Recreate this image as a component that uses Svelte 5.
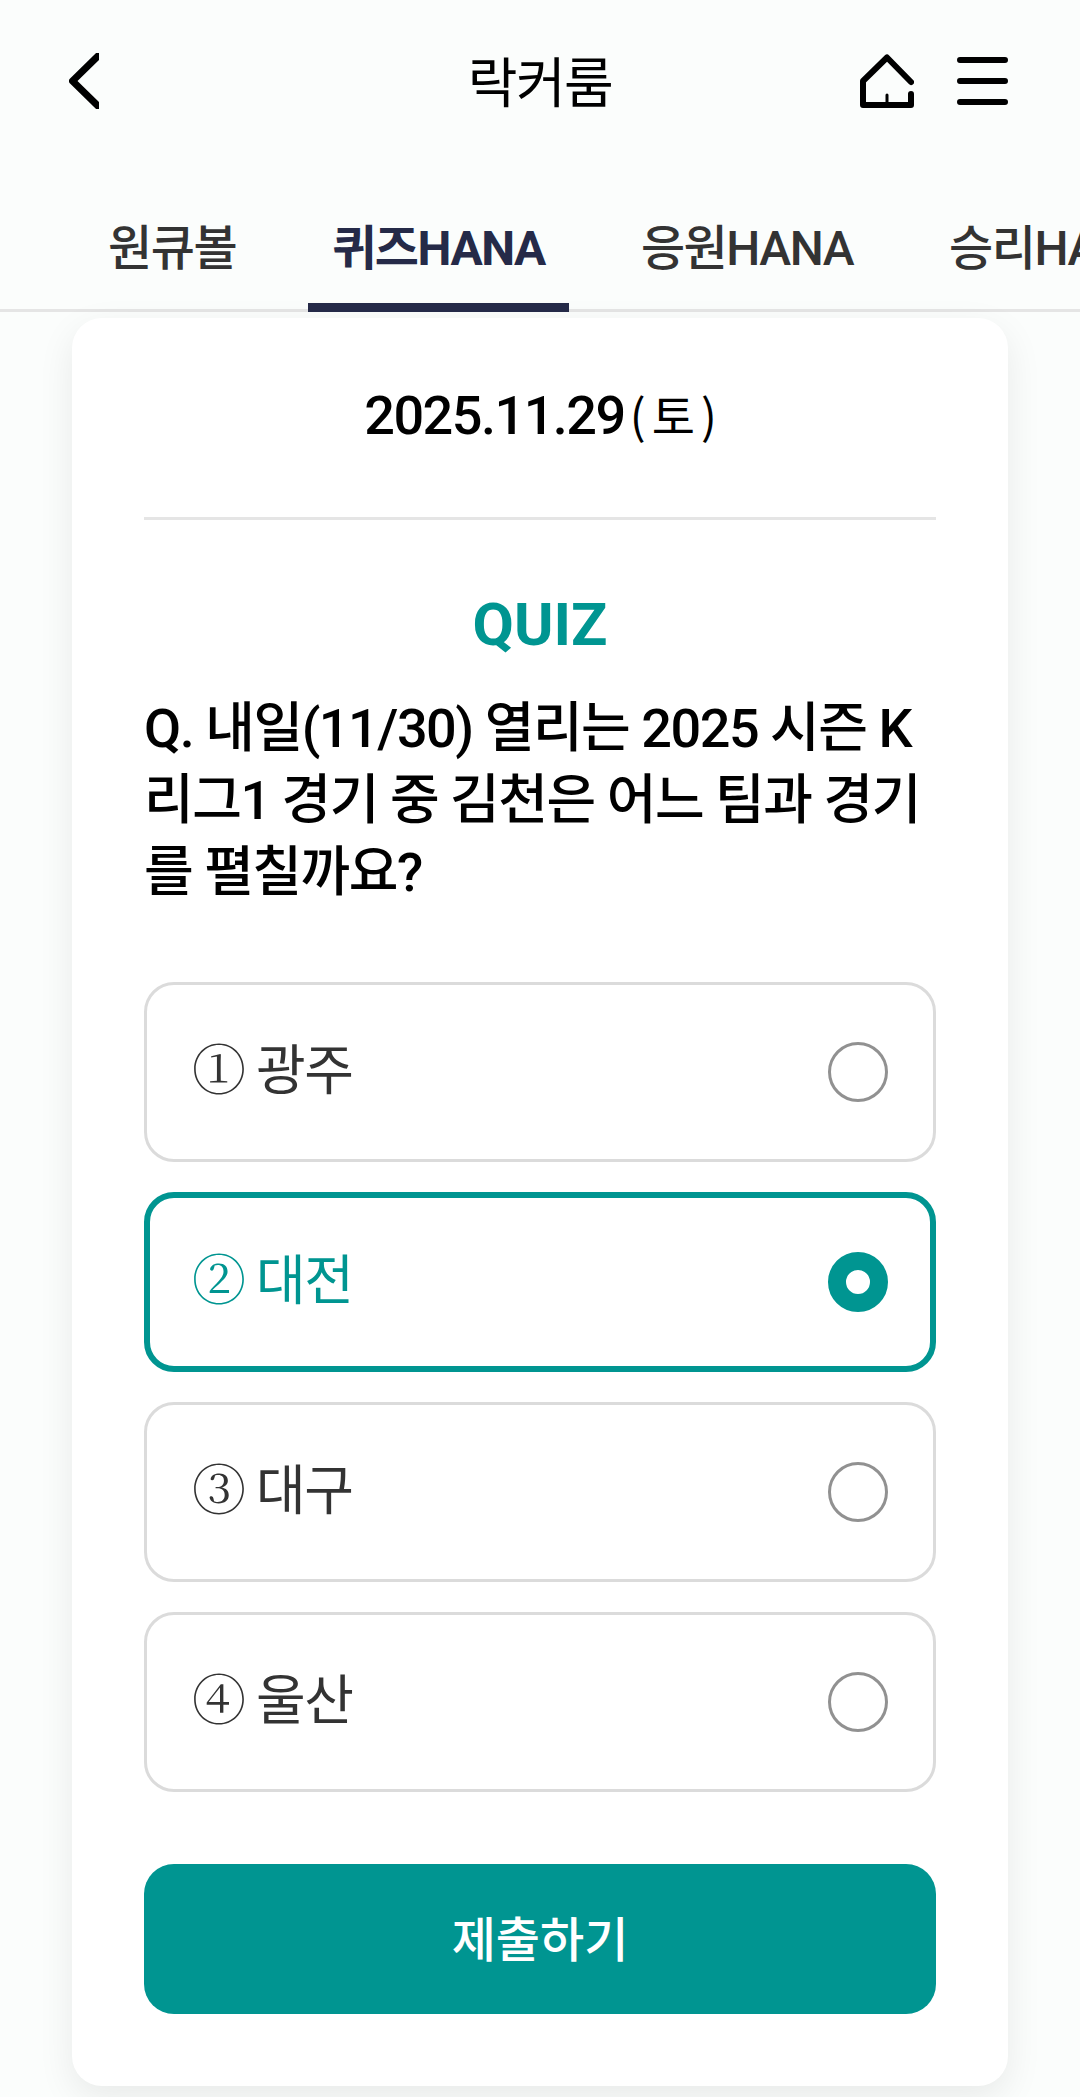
<script>
	const tabs = ["원큐볼", "퀴즈HANA", "응원HANA", "승리HANA"];
	const options = ["광주", "대전", "대구", "울산"];
	const marks = ["①", "②", "③", "④"];

	let activeTab = 1;
	let selected = 1;
</script>

<div class="page">
	<header>
		<button class="back" aria-label="뒤로">
			<svg width="30" height="56" viewBox="0 0 30 56"><path d="M29 3 L3.5 28 L29 53" /></svg>
		</button>
		<h1>락커룸</h1>
		<div class="actions">
			<button aria-label="홈">
				<svg width="54" height="54" viewBox="0 0 54 54">
					<path d="M51 28 L27 3.5 L3 27 V51 H51 V40" />
					<path class="door" d="M27 41 V50" />
				</svg>
			</button>
			<button aria-label="메뉴">
				<svg width="51" height="48" viewBox="0 0 51 48"><path d="M3 3 H48 M3 24 H48 M3 45 H48" /></svg>
			</button>
		</div>
	</header>

	<nav>
		{#each tabs as tab, i}
			<button class:active={activeTab === i} on:click={() => (activeTab = i)}>{tab}</button>
		{/each}
	</nav>

	<main>
		<p class="date">2025.11.29<span>(토)</span></p>
		<hr />
		<h2>QUIZ</h2>
		<p class="question">Q. 내일(11/30) 열리는 2025 시즌 K리그1 경기 중 김천은 어느 팀과 경기를 펼칠까요?</p>

		<div class="options">
			{#each options as option, i}
				<button class="option" class:selected={selected === i} on:click={() => (selected = i)}>
					<span class="mark">{marks[i]}</span>
					<span class="label">{option}</span>
					<span class="radio"></span>
				</button>
			{/each}
		</div>

		<button class="submit">제출하기</button>
	</main>
</div>

<style>
	:global(body) {
		background: #fbfdfc;
	}
	.page {
		width: 1080px;
		height: 2097px;
		overflow: hidden;
		font-family: Roboto, "Noto Sans CJK KR", sans-serif;
		color: #000;
	}
	button {
		padding: 0;
		border: none;
		background: none;
		font: inherit;
		color: inherit;
	}
	h1, h2, p {
		margin: 0;
	}
	svg {
		display: block;
		fill: none;
		stroke: #000;
		stroke-width: 6;
		stroke-linecap: round;
		stroke-linejoin: round;
	}
	header {
		display: grid;
		grid-template-columns: 1fr auto 1fr;
		align-items: center;
		height: 162px;
		padding: 0 72px 0 69px;
	}
	.back {
		justify-self: start;
	}
	.back svg {
		stroke-width: 7;
	}
	.door {
		stroke-width: 3;
	}
	h1 {
		padding: 0 0 3px 3px;
		font-size: 54px;
		font-weight: 400;
		letter-spacing: -1.5px;
	}
	.actions {
		display: flex;
		align-items: center;
		justify-content: flex-end;
		gap: 43px;
	}
	nav {
		display: flex;
		height: 147px;
		padding-left: 84px;
		gap: 48px;
		border-bottom: 3px solid #e5e5e5;
	}
	nav button {
		box-sizing: border-box;
		flex: none;
		height: 150px;
		padding: 22px 24px 0;
		border-bottom: 9px solid transparent;
		font-size: 48px;
		font-weight: 500;
		letter-spacing: -1.45px;
		color: #333;
	}
	nav button.active {
		border-color: #252a48;
		font-weight: 700;
		color: #252a48;
	}
	main {
		box-sizing: border-box;
		width: 936px;
		height: 1768px;
		margin: 6px auto 0;
		padding: 59px 72px 72px;
		border-radius: 30px;
		background: #fff;
		box-shadow: 0 12px 36px rgba(0, 0, 0, 0.08);
	}
	.date {
		height: 140px;
		line-height: 74px;
		text-align: center;
		font-size: 54px;
		font-weight: 500;
		letter-spacing: -1.5px;
	}
	.date span {
		margin: 0 -7px 0 5px;
		font-family: "Noto Sans CJK KR", sans-serif;
		font-size: 47px;
		font-weight: 400;
		letter-spacing: 6px;
	}
	hr {
		height: 3px;
		margin: 0;
		border: none;
		background: #e5e5e5;
	}
	h2 {
		margin-top: 67px;
		line-height: 76px;
		text-align: center;
		font-size: 60px;
		font-weight: 700;
		color: #009591;
	}
	.question {
		margin-top: 30px;
		line-height: 72px;
		font-size: 54px;
		font-weight: 500;
		letter-spacing: -1.47px;
		word-break: break-all;
	}
	.options {
		display: grid;
		gap: 30px;
		margin-top: 73px;
	}
	.option {
		display: flex;
		align-items: center;
		box-sizing: border-box;
		height: 180px;
		padding: 0 45px;
		border: 3px solid #dbdbdb;
		border-radius: 30px;
		font-size: 54px;
		letter-spacing: -1.5px;
		color: #333;
	}
	.mark, .label {
		padding-bottom: 12px;
	}
	.mark {
		width: 64px;
		text-align: left;
		font-family: "DejaVu Serif", "Noto Serif CJK KR", serif;
	}
	.radio {
		box-sizing: border-box;
		width: 60px;
		height: 60px;
		margin-left: auto;
		border: 3px solid #919191;
		border-radius: 50%;
	}
	.option.selected {
		padding: 0 42px;
		border: 6px solid #009591;
		color: #009591;
	}
	.selected .radio {
		border: 18px solid #009591;
	}
	.submit {
		display: block;
		width: 100%;
		height: 150px;
		margin-top: 72px;
		padding-bottom: 6px;
		border-radius: 30px;
		background: #009591;
		font-size: 48px;
		font-weight: 500;
		color: #fff;
	}
</style>
